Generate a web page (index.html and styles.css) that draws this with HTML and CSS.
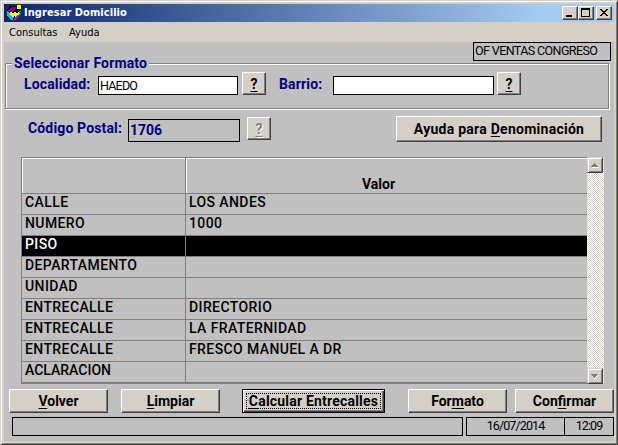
FILE: index.html
```html
<!DOCTYPE html>
<html lang="es">
<head>
<meta charset="utf-8">
<title>Ingresar Domicilio</title>
<link rel="stylesheet" href="styles.css">
</head>
<body>
<div class="window">
  <header class="titlebar">
    <svg class="app-icon" width="16" height="16" viewBox="0 0 16 16" shape-rendering="crispEdges">
      <path d="M4 1h6v3h4v5l-1 2-4 4H6l-5-4V5z" fill="#000"/>
      <path d="M5 2h5v2L6 7H2V5z" fill="#800080"/>
      <path d="M1 6l3 2 4 4-1 3H6L1 11z" fill="#00c8d0"/>
      <path d="M8 13l5-4v2l-4 4H7v-1z" fill="#d000d0"/>
      <path d="M13 6h2v3l-3 3h-1z" fill="#008040"/>
      <path d="M4 7h2v1h1v1H6v1H4V9H3V8h1zM8 7h2v1h1v1h-1v1H8V9H7V8h1zM12 7h1v1h1v1h-1v1h-1V9h-1V8h1zM6 9h2v1h1v1H8v1H6v-1H5v-1h1zM10 9h2v1h-1v1h-1v1H9v-2h1z" fill="#ff0"/>
      <path d="M11 0h4v4h-4z" fill="#ff0"/>
    </svg>
    <h1 class="title">Ingresar Domicilio</h1>
    <div class="controls">
      <button class="control"><svg width="14" height="12" shape-rendering="crispEdges"><path d="M3 8h6v2H3z"/></svg></button>
      <button class="control"><svg width="14" height="12" shape-rendering="crispEdges"><path d="M2 1h9v9H2zM3 3v6h7V3z" fill-rule="evenodd"/></svg></button>
      <button class="control close"><svg width="14" height="12" shape-rendering="crispEdges"><path d="M3 2h2v1h1v1h2V3h1V2h2v1h-1v1H9v1H8v1h1v1h1v1h1v1H9V8H8V7H6v1H5v1H3V8h1V7h1V6h1V5H5V4H4V3H3z"/></svg></button>
    </div>
  </header>
  <nav class="menu"><span class="menu-first">Consultas</span><span class="menu-second">Ayuda</span></nav>
  <main class="content">
    <div class="office">OF VENTAS CONGRESO</div>
    <section class="group">
      <h2 class="legend"><span class="legend-text">Seleccionar Formato</span></h2>
      <div class="fields">
        <label class="label label-city">Localidad:</label>
        <div class="input input-city">HAEDO</div>
        <button class="button help"><u>?</u></button>
        <label class="label label-area">Barrio:</label>
        <div class="input input-area"></div>
        <button class="button help help-area"><u>?</u></button>
      </div>
    </section>
    <div class="postal">
      <label class="label label-postal">Código Postal:</label>
      <div class="postal-code">1706</div>
      <button class="button help disabled"><u>?</u></button>
      <button class="button name-help"><span>Ayuda para <u>D</u>enominación</span></button>
    </div>
    <div class="grid-area">
      <div class="table">
        <div class="row head"><div class="cell"></div><div class="cell value">Valor</div></div>
        <div class="row"><div class="cell">CALLE</div><div class="cell">LOS ANDES</div></div>
        <div class="row"><div class="cell">NUMERO</div><div class="cell">1000</div></div>
        <div class="row selected"><div class="cell">PISO</div><div class="cell"></div></div>
        <div class="row"><div class="cell">DEPARTAMENTO</div><div class="cell"></div></div>
        <div class="row"><div class="cell">UNIDAD</div><div class="cell"></div></div>
        <div class="row"><div class="cell">ENTRECALLE</div><div class="cell">DIRECTORIO</div></div>
        <div class="row"><div class="cell">ENTRECALLE</div><div class="cell">LA FRATERNIDAD</div></div>
        <div class="row"><div class="cell">ENTRECALLE</div><div class="cell">FRESCO MANUEL A DR</div></div>
        <div class="row"><div class="cell tight">ACLARACION</div><div class="cell"></div></div>
      </div>
      <div class="scrollbar">
        <div class="arrow"><svg width="12" height="12" shape-rendering="crispEdges"><path d="M3 8h7v1H3z" fill="#fff"/><path d="M5 4h1v1h1v1h1v1h1v1H2V7h1V6h1V5h1z" fill="#808080"/></svg></div>
        <div class="arrow"><svg width="12" height="12" shape-rendering="crispEdges"><path d="M9 4h1v1H9v1H8v1H7v1H6v1H5V8z" fill="#fff"/><path d="M2 4h7v1H8v1H7v1H6v1H5V7H4V6H3V5H2z" fill="#808080"/></svg></div>
      </div>
    </div>
    <footer>
      <div class="actions">
        <button class="button action"><span><u>V</u>olver</span></button>
        <button class="button action clear"><span><u>L</u>impiar</span></button>
        <button class="button action primary"><span class="focus"><u>C</u>alcular Entrecalles</span></button>
        <button class="button action format"><span>For<u>m</u>ato</span></button>
        <button class="button action confirm"><span>Con<u>f</u>irmar</span></button>
      </div>
      <div class="status">
        <div class="status-message"></div>
        <div class="status-date">16/07/2014</div>
        <div class="status-time">12:09</div>
      </div>
    </footer>
  </main>
</div>
</body>
</html>
```
FILE: styles.css
```css
* { box-sizing: border-box; }
body { margin: 0; overflow: hidden; font: 700 14px/16px Roboto, "Liberation Sans", sans-serif; color: #000; }
h1, h2 { margin: 0; font-size: inherit; }
button { margin: 0; padding: 0; font: inherit; color: inherit; border-radius: 0; }
svg { display: block; }
u { text-decoration: underline; text-decoration-thickness: 1px; text-underline-offset: 2px; text-decoration-skip-ink: none; }

.window {
  width: 618px; height: 445px; padding: 3px 3px 2px 3px;
  background: #d4d0c8; border: 1px solid #d4d0c8;
  border-right-color: #404040; border-bottom-color: #404040;
  box-shadow: inset 1px 1px #fff, inset -1px -1px #808080;
}
.titlebar { display: flex; align-items: center; height: 18px; padding: 0 2px; background: linear-gradient(90deg, #0a246a, #a6caf0 88%); }
.title { margin-left: 2px; color: #fff; font: 700 11px/14px "DejaVu Sans Condensed", "DejaVu Sans", sans-serif; font-stretch: condensed; letter-spacing: 0.06px; }
.controls { display: flex; margin-left: auto; }
.control { width: 16px; height: 14px; background: #d4d0c8; border: 1px solid; border-color: #fff #404040 #404040 #fff; box-shadow: inset -1px -1px #808080; }
.close { margin-left: 2px; }
.menu { display: flex; height: 20px; padding-left: 5px; font: 11px/21px "DejaVu Sans Condensed", "DejaVu Sans", sans-serif; font-stretch: condensed; }
.menu-first { width: 60px; }

.content { height: 399px; background: #c0c0c0; }
.office { width: 138px; height: 19px; margin: 0 3px 0 auto; border: 1px solid #000; padding: 0 1px; font-weight: 400; font-size: 12.5px; line-height: 16px; letter-spacing: -0.6px; white-space: nowrap; }
.group { width: 604px; height: 46px; margin: 2px 0 0 1px; border: 1px solid #808080; box-shadow: inset 1px 1px #fff, 1px 1px #fff; }
.legend { display: flex; height: 16px; margin: -9px 0 0 6px; color: #000080; letter-spacing: 0.15px; }
.legend-text { background: #c0c0c0; padding: 0 2px; }
.fields { display: flex; align-items: flex-end; height: 24px; padding-left: 18px; }
.label { color: #000080; white-space: nowrap; align-self: flex-start; letter-spacing: 0.15px; }
.label-city { width: 74px; margin-top: 5px; }
.label-area { width: 54px; margin: 5px 0 0 13px; }
.input { height: 19px; background: #fff; border: 1px solid #000; padding-left: 1px; font-weight: 400; font-size: 12.5px; line-height: 17px; letter-spacing: -0.8px; }
.input-city { width: 140px; }
.input-area { width: 161px; }
.button { display: flex; align-items: center; justify-content: center; white-space: nowrap; background: #d4d0c8; border: 1px solid; border-color: #fff #404040 #404040 #fff; box-shadow: inset -1px -1px #808080; }
.help { width: 24px; height: 23px; margin-left: 4px; }
.help-area { margin-left: 3px; }
.disabled { color: #808080; text-shadow: 1px 1px #fff; margin: 1px 0 0 7px; }
.postal { display: flex; height: 26px; margin-top: 7px; padding-left: 24px; }
.label-postal { width: 100px; margin-top: 4px; }
.postal-code { width: 112px; height: 23px; margin-top: 3px; padding: 2px 1px; border: 1px solid #000; color: #000080; }
.name-help { width: 206px; height: 26px; margin-left: 125px; letter-spacing: 0.26px; }

.grid-area { display: flex; height: 227px; margin: 15px 0 0 17px; }
.table { width: 566px; border-top: 1px solid #808080; border-left: 1px solid #808080; border-bottom: 1px solid #808080; }
.row { display: grid; grid-template-columns: 164px 1fr; height: 21px; border-bottom: 1px solid #808080; }
.cell { padding: 0 3px; font-weight: 500; line-height: 17px; letter-spacing: 0.4px; white-space: nowrap; }
.cell.tight { letter-spacing: 0; }
.cell:first-child { border-right: 1px solid #808080; }
.head { height: 36px; }
.head .cell { box-shadow: inset 1px 1px #fff; }
.cell.value { display: flex; align-items: flex-end; justify-content: center; padding: 0 16px 0 0; font-weight: 700; letter-spacing: 0; }
.selected { background: #000; color: #fff; }
.scrollbar { display: flex; flex-direction: column; justify-content: space-between; width: 17px; background: repeating-conic-gradient(#fff 0 25%, #d4d0c8 0 50%) 0 0 / 2px 2px; }
.arrow { width: 16px; height: 16px; padding: 1px; background: #d4d0c8; border: 1px solid; border-color: #d4d0c8 #404040 #404040 #d4d0c8; box-shadow: inset 1px 1px #fff, inset -1px -1px #808080; }

.actions { display: flex; margin-top: 5px; padding-left: 5px; }
.action { width: 99px; height: 24px; }
.clear { margin-left: 13px; }
.primary { width: 143px; margin-left: 22px; border-color: #000; box-shadow: inset 1px 1px #fff, inset -1px -1px #404040, inset -2px -2px #808080; }
.focus { width: 135px; height: 16px; outline: 1px dotted #000; outline-offset: -1px; line-height: 16px; letter-spacing: 0.2px; }
.format { margin-left: 23px; }
.confirm { margin-left: 8px; }
.status { display: flex; height: 19px; margin: 4px 0 0 8px; font-weight: 400; font-size: 12.5px; line-height: 16px; letter-spacing: -0.9px; text-align: center; }
.status > div { border: 1px solid #000; }
.status-message { width: 451px; }
.status-date { width: 99px; margin-left: 3px; }
.status-time { width: 50px; margin-left: -1px; }
```
